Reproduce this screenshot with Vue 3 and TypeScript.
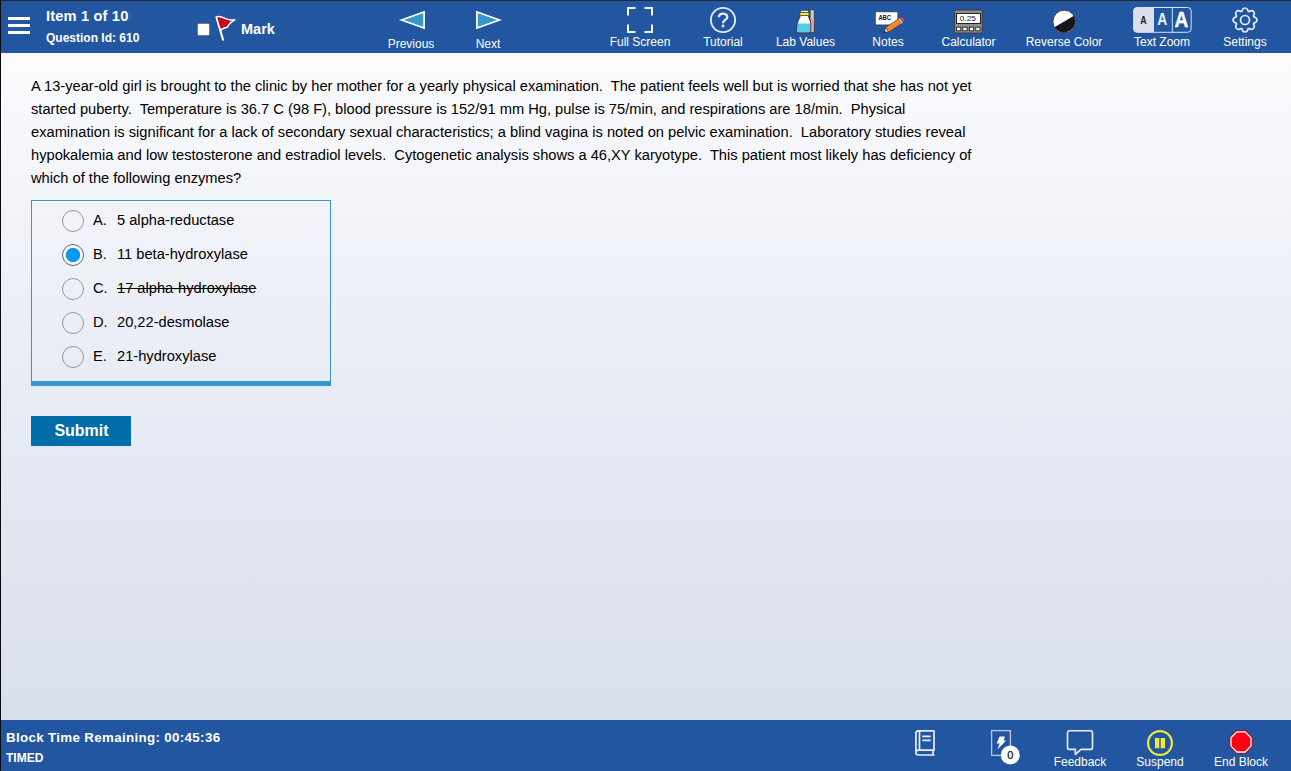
<script setup lang="ts">
import { ref } from 'vue'

interface Choice {
  letter: string
  text: string
  struck?: boolean
}

const choices: Choice[] = [
  { letter: 'A.', text: '5 alpha-reductase' },
  { letter: 'B.', text: '11 beta-hydroxylase' },
  { letter: 'C.', text: '17 alpha-hydroxylase', struck: true },
  { letter: 'D.', text: '20,22-desmolase' },
  { letter: 'E.', text: '21-hydroxylase' },
]

const stem: string[] = [
  'A 13-year-old girl is brought to the clinic by her mother for a yearly physical examination.  The patient feels well but is worried that she has not yet',
  'started puberty.  Temperature is 36.7 C (98 F), blood pressure is 152/91 mm Hg, pulse is 75/min, and respirations are 18/min.  Physical',
  'examination is significant for a lack of secondary sexual characteristics; a blind vagina is noted on pelvic examination.  Laboratory studies reveal',
  'hypokalemia and low testosterone and estradiol levels.  Cytogenetic analysis shows a 46,XY karyotype.  This patient most likely has deficiency of',
  'which of the following enzymes?',
]

const selected = ref<number>(1)
const marked = ref<boolean>(false)
</script>

<template>
  <div class="app">
    <header class="bar top">
      <div class="menu"><i></i><i></i><i></i></div>
      <div class="item-info">
        <div class="item-no">Item 1 of 10</div>
        <div class="qid">Question Id: 610</div>
      </div>
      <label class="mark">
        <span class="box" @click="marked = !marked"></span>
        <svg width="24" height="28" viewBox="214 14 24 28">
          <path d="M216.6 17.2 L223.2 40.5" stroke="#fff" stroke-width="2.1" fill="none" />
          <path d="M216.2 17 Q220 15.8 225 18.4 Q230 20.7 234.8 19.8 Q229.5 22.6 227.5 27 Q224 28 220.3 30 Z" fill="#d0021b" stroke="#fff" stroke-width="1.5" stroke-linejoin="round" />
        </svg>
        <span class="mark-text">Mark</span>
      </label>
      <nav class="pager">
        <div class="tool">
          <svg width="66" height="34" viewBox="378 1 66 34">
            <path d="M401.5 20 L424.1 12 V28 Z" fill="#3496cd" stroke="#fff" stroke-width="1.7" />
          </svg>
          <span>Previous</span>
        </div>
        <div class="tool">
          <svg width="66" height="34" viewBox="455 1 66 34">
            <path d="M499.5 20 L476.9 12 V28 Z" fill="#3496cd" stroke="#fff" stroke-width="1.7" />
          </svg>
          <span>Next</span>
        </div>
      </nav>
      <nav class="tools">
        <div class="tool">
          <svg width="66" height="34" viewBox="607 1 66 34">
            <path d="M635.5 8H628v7.5M644.5 8H652v7.5M635.5 32H628v-7.5M644.5 32H652v-7.5" fill="none" stroke="#f4f7fb" stroke-width="2" />
          </svg>
          <span>Full Screen</span>
        </div>
        <div class="tool">
          <svg width="66" height="34" viewBox="690 1 66 34">
            <circle cx="723" cy="20" r="12.1" fill="none" stroke="#e9eef7" stroke-width="1.8" />
            <path d="M718.9 17.2 C719 12.6 727.3 12.5 727.3 17 C727.3 20 723 19.8 723 23.2" fill="none" stroke="#e9eef7" stroke-width="2.2" />
            <circle cx="723" cy="26" r="1.4" fill="#e9eef7" />
          </svg>
          <span>Tutorial</span>
        </div>
        <div class="tool">
          <svg width="65" height="34" viewBox="773 1 65 34">
            <path d="M810.2 9.7h4v22.1q-2 1.4-4 0z" fill="#c7cbd6" stroke="#222" stroke-width=".6" />
            <path d="M810.8 19h2.8v12.3h-2.8z" fill="#ee9ca4" />
            <path d="M800.2 15.5h8.2c.2 2.6 2.2 4.7 2.3 8.2v6.8q0 2.3-2.3 2.3h-9.2q-2.6 0-2.4-2.3l.6-7c.3-3.5 2.5-5 2.8-8z" fill="#fbfbf2" stroke="#222" stroke-width=".9" />
            <path d="M797.6 23.5h12.6v6.8q0 2-2 2h-8.8q-2.4 0-2.2-2z" fill="#52cce2" />
            <rect x="800" y="12.8" width="8.9" height="2.6" fill="#f0e63c" stroke="#222" stroke-width=".3" />
            <rect x="800.7" y="10.3" width="8" height="2.2" fill="#f5f7fb" stroke="#222" stroke-width=".6" />
          </svg>
          <span>Lab Values</span>
        </div>
        <div class="tool">
          <svg width="66" height="34" viewBox="855 1 66 34">
            <rect x="875.4" y="11.9" width="22.4" height="13" fill="#fff" stroke="#333" stroke-width=".6" />
            <text x="878.4" y="20.3" font-size="6.4" font-weight="bold" textLength="12.6" lengthAdjust="spacingAndGlyphs" fill="#111">ABC</text>
            <path d="M883.6 32.6 L886 27.2 L889 31.8 Z" fill="#f6d3a4" stroke="#222" stroke-width=".6" />
            <path d="M883.4 32.8l1-2 1.2 1.5z" fill="#111" />
            <path d="M885.8 27.2 L898.4 19 L901.4 23.7 L888.8 31.9 Z" fill="#f58a2c" stroke="#333" stroke-width=".6" />
            <path d="M898.4 19l1.6-1 3 4.6-1.6 1.1z" fill="#c9ced8" />
            <path d="M899.7 18.2l1.2-.8q2.1-.4 2.8 1.8.9 1.8-.8 3z" fill="#f2465c" stroke="#9f2937" stroke-width=".5" />
          </svg>
          <span>Notes</span>
        </div>
        <div class="tool">
          <svg width="65" height="34" viewBox="936 1 65 34">
            <rect x="954.6" y="10" width="27.6" height="23" rx="1.5" fill="#8f9092" stroke="#3a3b3d" />
            <rect x="956.5" y="13.5" width="24" height="10" fill="#fff" stroke="#222" />
            <text x="959.8" y="21.2" font-size="8" fill="#111" textLength="16" lengthAdjust="spacingAndGlyphs">0.25</text>
            <g fill="#fff" stroke="#222" stroke-width=".9">
              <rect x="956.6" y="27.2" width="4.2" height="3.6" /><rect x="962.8" y="27.2" width="4.2" height="3.6" /><rect x="969.4" y="27.2" width="4.2" height="3.6" /><rect x="975.8" y="27.2" width="4.2" height="3.6" />
            </g>
          </svg>
          <span>Calculator</span>
        </div>
        <div class="tool">
          <svg width="66" height="34" viewBox="1031 1 66 34">
            <circle cx="1064.2" cy="21.5" r="11.4" fill="#fff" />
            <path d="M1054.4 27.3 L1074 15.7 A11.4 11.4 0 0 1 1054.4 27.3Z" fill="#151515" />
            <circle cx="1064.2" cy="21.5" r="11.3" fill="none" stroke="#3a3a3a" stroke-width="1" />
          </svg>
          <span>Reverse Color</span>
        </div>
        <div class="tool">
          <svg width="66" height="34" viewBox="1129 1 66 34">
            <path d="M1137 7.5h16.5v24.7H1137q-3.3 0-3.3-3.3V10.8q0-3.3 3.3-3.3z" fill="#d9dfed" />
            <rect x="1133.6" y="7.5" width="57.6" height="24.8" rx="3.5" fill="none" stroke="#d9e1ef" stroke-width="1" />
            <path d="M1153.5 8v24M1172.3 8v24" stroke="#d9e1ef" />
            <text x="1140.3" y="24.2" font-size="10.5" font-weight="bold" textLength="6.4" lengthAdjust="spacingAndGlyphs" fill="#1b1b1b">A</text>
            <text x="1157.2" y="25.4" font-size="16.5" font-weight="bold" textLength="10" lengthAdjust="spacingAndGlyphs" fill="#edf1f8">A</text>
            <text x="1174.6" y="27.3" font-size="22" font-weight="bold" textLength="13.8" lengthAdjust="spacingAndGlyphs" fill="#fff" stroke="#fff" stroke-width=".4">A</text>
          </svg>
          <span>Text Zoom</span>
        </div>
        <div class="tool">
          <svg width="66" height="34" viewBox="1212 1 66 34">
            <g transform="translate(1233 8) scale(1.5)" fill="none" stroke="#e9eef7" stroke-width="1.15" stroke-linejoin="round">
              <path d="M9.796 1.343c-.527-1.79-3.065-1.79-3.592 0l-.094.319a.873.873 0 0 1-1.255.52l-.292-.16c-1.64-.892-3.433.902-2.54 2.541l.159.292a.873.873 0 0 1-.52 1.255l-.319.094c-1.79.527-1.79 3.065 0 3.592l.319.094a.873.873 0 0 1 .52 1.255l-.16.292c-.892 1.64.901 3.434 2.541 2.54l.292-.159a.873.873 0 0 1 1.255.52l.094.319c.527 1.79 3.065 1.79 3.592 0l.094-.319a.873.873 0 0 1 1.255-.52l.292.16c1.64.893 3.434-.902 2.54-2.541l-.159-.292a.873.873 0 0 1 .52-1.255l.319-.094c1.79-.527 1.79-3.065 0-3.592l-.319-.094a.873.873 0 0 1-.52-1.255l.16-.292c.893-1.64-.902-3.433-2.541-2.54l-.292.159a.873.873 0 0 1-1.255-.52z" />
              <circle cx="8" cy="8" r="3" />
            </g>
          </svg>
          <span>Settings</span>
        </div>
      </nav>
    </header>

    <main class="content">
      <div class="stem">
        <div v-for="(line, i) in stem" :key="i" class="line">{{ line }}</div>
      </div>
      <div class="choices">
        <div v-for="(c, i) in choices" :key="c.letter" class="choice" @click="selected = i">
          <span class="radio" :class="{ on: selected === i }"></span>
          <span class="letter">{{ c.letter }}</span>
          <span class="answer" :class="{ struck: c.struck }">{{ c.text }}</span>
        </div>
      </div>
      <button class="submit">Submit</button>
    </main>

    <footer class="bar bottom">
      <div class="timer">
        <div class="remaining">Block Time Remaining: 00:45:36</div>
        <div class="timed">TIMED</div>
      </div>
      <nav class="foot-tools">
        <div class="tool">
          <svg width="60" height="40" viewBox="895 722 60 40">
            <g fill="none" stroke="#e9eef7" stroke-width="1.7" stroke-linejoin="round">
              <path d="M918.5 730.8H934v19.4H918.5q-2.6 0-2.6 2.4t2.6 2.4H934.6M915.9 752.5V733.4q0-2.6 2.6-2.6M919.5 731v19M933 750.5v4.4" />
              <path d="M922.3 736.4h8.4M922.3 740.4h8.4" />
            </g>
          </svg>
        </div>
        <div class="tool">
          <svg width="60" height="44" viewBox="971 722 60 44">
            <rect x="991.6" y="730.6" width="18.8" height="24.8" fill="none" stroke="#bccbe3" stroke-width="1.3" />
            <path d="M999.6 736.5h5.2l-1.2 4.1h2.6l-8.8 8.8 2.2-5.9h-3z" fill="#fff" />
            <circle cx="1010.3" cy="755" r="9.5" fill="#fff" />
            <text x="1010.3" y="759" font-size="11" text-anchor="middle" fill="#111" stroke="#111" stroke-width=".25">0</text>
          </svg>
        </div>
        <div class="tool">
          <svg width="60" height="34" viewBox="1050 722 60 34">
            <path d="M1069.5 730.8h21q2 0 2 2v14.6q0 2-2 2h-9.6l-5.5 5v-5h-5.9q-2 0-2-2v-14.6q0-2 2-2z" fill="none" stroke="#e9eef7" stroke-width="1.6" stroke-linejoin="round" />
          </svg>
          <span>Feedback</span>
        </div>
        <div class="tool">
          <svg width="60" height="34" viewBox="1130 722 60 34">
            <circle cx="1160" cy="743" r="11.9" fill="none" stroke="#eee83f" stroke-width="2.2" />
            <path d="M1155 738h4.3v10.3h-4.3zM1160.7 738h4.3v10.3h-4.3z" fill="#eee83f" />
          </svg>
          <span>Suspend</span>
        </div>
        <div class="tool">
          <svg width="60" height="34" viewBox="1211 722 60 34">
            <path d="M1236.2 730h9.6l6.8 6.9v10l-6.8 6.9h-9.6l-6.8-6.9v-10z" fill="#a30a22" />
            <path d="M1236.8 731.8h8.4l5.8 5.9v8.4l-5.8 5.9h-8.4l-5.8-5.9v-8.4z" fill="#ff0014" stroke="#fff" stroke-width="1.3" />
          </svg>
          <span>End Block</span>
        </div>
      </nav>
    </footer>
  </div>
</template>

<style>
body {
  margin: 0;
  overflow: hidden;
}
</style>

<style scoped>
.app {
  box-sizing: border-box;
  width: 1291px;
  height: 771px;
  display: flex;
  flex-direction: column;
  border-top: 1px solid #25262d;
  border-left: 1px solid #090b10;
  font-family: "Liberation Sans", Arial, sans-serif;
  color: #000;
}
.bar {
  flex: none;
  display: flex;
  background: #2256a0;
  color: #fff;
}
.top {
  height: 52px;
}
.menu {
  width: 45px;
  padding: 16px 0 0 7px;
  box-sizing: border-box;
  display: flex;
  flex-direction: column;
  gap: 4px;
}
.menu i {
  width: 22px;
  height: 3px;
  background: #fff;
}
.item-info {
  width: 151px;
  font-weight: bold;
  white-space: nowrap;
}
.item-no {
  font-size: 14.67px;
  line-height: 18px;
  margin-top: 6px;
  letter-spacing: 0.15px;
}
.qid {
  font-size: 12px;
  line-height: 16px;
  margin-top: 5px;
}
.mark {
  width: 175px;
  display: flex;
}
.box {
  width: 11px;
  height: 11px;
  margin: 22px 6px 0 0;
  border: 1px solid #7b7b7b;
  border-radius: 2px;
  background: #fff;
}
.mark svg {
  margin: 13px 0 0 -2px;
}
.mark-text {
  margin: 19px 0 0 3px;
  font-size: 14.5px;
  line-height: 18px;
  font-weight: bold;
}
.tool {
  display: flex;
  flex-direction: column;
  align-items: center;
  white-space: nowrap;
  font-size: 12px;
  line-height: 14px;
}
.tool svg {
  flex: none;
  display: block;
}
.pager {
  display: grid;
  grid-template-columns: 78px 76px;
  width: 228px;
}
.pager .tool span {
  margin-top: 2px;
}
.tools {
  display: grid;
  grid-template-columns: 80px 86px 79px 86px 75px 116px 80px 86px;
}
.content {
  flex: 1;
  padding: 22px 30px 0;
  background: linear-gradient(#fbfbfd, #eceff7 38%, #d8deeb);
}
.line {
  height: 23px;
  line-height: 23px;
  font-size: 11pt;
  white-space: pre;
}
.choices {
  box-sizing: border-box;
  width: 300px;
  height: 186px;
  margin-top: 10px;
  padding: 3px 0 0 30px;
  border: 1px solid #3496cd;
  border-bottom-width: 5px;
}
.choice {
  display: flex;
  height: 34px;
  font-size: 11pt;
  line-height: 32px;
}
.radio {
  box-sizing: border-box;
  width: 22px;
  height: 22px;
  margin: 6px 9px 0 0;
  border: 1px solid #979797;
  border-radius: 50%;
}
.radio.on {
  border-color: #666;
  background: radial-gradient(circle, #0599f2 0 6.8px, #f6f8fc 7.4px);
}
.letter {
  width: 24px;
}
.answer {
  white-space: nowrap;
}
.struck {
  text-decoration: line-through;
}
.submit {
  display: block;
  width: 100px;
  height: 30px;
  margin-top: 30px;
  padding: 0 0 0 1px;
  border: 0;
  background: #006ea9;
  color: #fff;
  font: bold 16px/30px "Liberation Sans", Arial, sans-serif;
}
.bottom {
  height: 51px;
}
.timer {
  width: 887px;
  padding-left: 5px;
  box-sizing: border-box;
  font-weight: bold;
}
.remaining {
  margin-top: 8px;
  font-size: 13.33px;
  line-height: 19px;
  letter-spacing: 0.34px;
}
.timed {
  margin-top: 3px;
  font-size: 12px;
  line-height: 16px;
}
.foot-tools {
  display: grid;
  grid-template-columns: 74px 78px 80px 80px 82px;
  padding-top: 2px;
}
.foot-tools .tool span {
  margin-top: -1px;
}
</style>
